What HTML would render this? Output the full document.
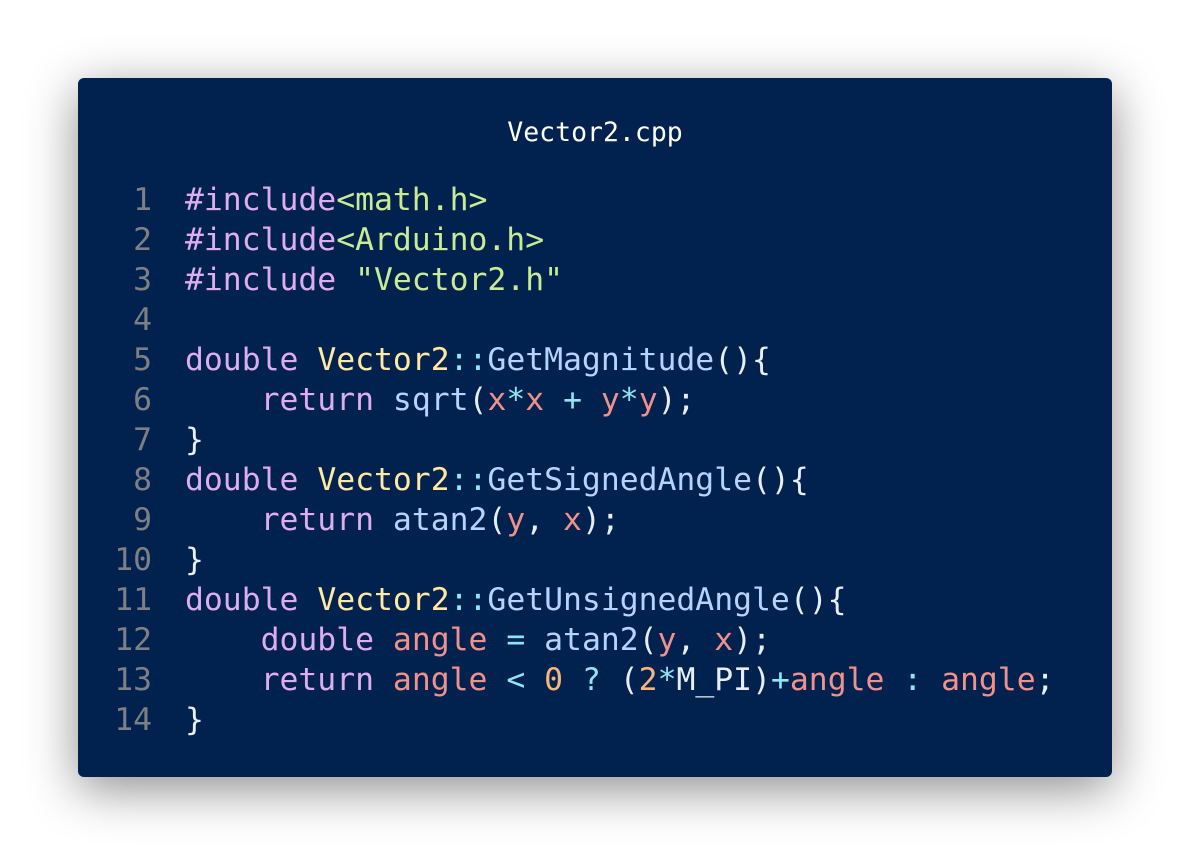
<!DOCTYPE html>
<html><head><style>
html,body{margin:0;padding:0;background:#fff;width:1190px;height:856px;overflow:hidden}
.win{position:absolute;left:78px;top:78px;width:1034px;height:699px;background:#01224f;border-radius:6px;box-shadow:0 12px 50px rgba(0,0,0,0.45)}
.title{position:absolute;left:0;width:100%;top:117px;text-align:center;color:#fff;font:26.5px "DejaVu Sans Mono","Liberation Mono",monospace;line-height:32px}
.code{position:absolute;left:0;top:180px;font-family:"DejaVu Sans Mono","Liberation Mono",monospace;font-size:31.4px;line-height:40px;color:#e8eef8;white-space:pre}
.ln{position:absolute;left:0;width:152px;text-align:right;color:#7d7f85}
.l{position:absolute;left:185px}
.k{color:#dfadef}.s{color:#c8eb94}.y{color:#ffe9a3}.f{color:#b5d3ff}.r{color:#f2918c}.c{color:#8fe6f2}.o{color:#f7b47c}
</style></head><body>
<div class="win"></div>
<div class="title">Vector2.cpp</div>
<div class="code">
<div class="ln" style="top:0">1</div><div class="l" style="top:0"><span class="k">#include</span><span class="s">&lt;math.h&gt;</span></div>
<div class="ln" style="top:40px">2</div><div class="l" style="top:40px"><span class="k">#include</span><span class="s">&lt;Arduino.h&gt;</span></div>
<div class="ln" style="top:80px">3</div><div class="l" style="top:80px"><span class="k">#include</span> <span class="s">"Vector2.h"</span></div>
<div class="ln" style="top:120px">4</div>
<div class="ln" style="top:160px">5</div><div class="l" style="top:160px"><span class="k">double</span> <span class="y">Vector2</span><span class="c">::</span><span class="f">GetMagnitude</span>(){</div>
<div class="ln" style="top:200px">6</div><div class="l" style="top:200px">    <span class="k">return</span> <span class="f">sqrt</span>(<span class="r">x</span><span class="c">*</span><span class="r">x</span> <span class="c">+</span> <span class="r">y</span><span class="c">*</span><span class="r">y</span>);</div>
<div class="ln" style="top:240px">7</div><div class="l" style="top:240px">}</div>
<div class="ln" style="top:280px">8</div><div class="l" style="top:280px"><span class="k">double</span> <span class="y">Vector2</span><span class="c">::</span><span class="f">GetSignedAngle</span>(){</div>
<div class="ln" style="top:320px">9</div><div class="l" style="top:320px">    <span class="k">return</span> <span class="f">atan2</span>(<span class="r">y</span>, <span class="r">x</span>);</div>
<div class="ln" style="top:360px">10</div><div class="l" style="top:360px">}</div>
<div class="ln" style="top:400px">11</div><div class="l" style="top:400px"><span class="k">double</span> <span class="y">Vector2</span><span class="c">::</span><span class="f">GetUnsignedAngle</span>(){</div>
<div class="ln" style="top:440px">12</div><div class="l" style="top:440px">    <span class="k">double</span> <span class="r">angle</span> <span class="c">=</span> <span class="f">atan2</span>(<span class="r">y</span>, <span class="r">x</span>);</div>
<div class="ln" style="top:480px">13</div><div class="l" style="top:480px">    <span class="k">return</span> <span class="r">angle</span> <span class="c">&lt;</span> <span class="o">0</span> <span class="c">?</span> (<span class="o">2</span><span class="c">*</span>M_PI)<span class="c">+</span><span class="r">angle</span> <span class="c">:</span> <span class="r">angle</span>;</div>
<div class="ln" style="top:520px">14</div><div class="l" style="top:520px">}</div>
</div>
</body></html>
